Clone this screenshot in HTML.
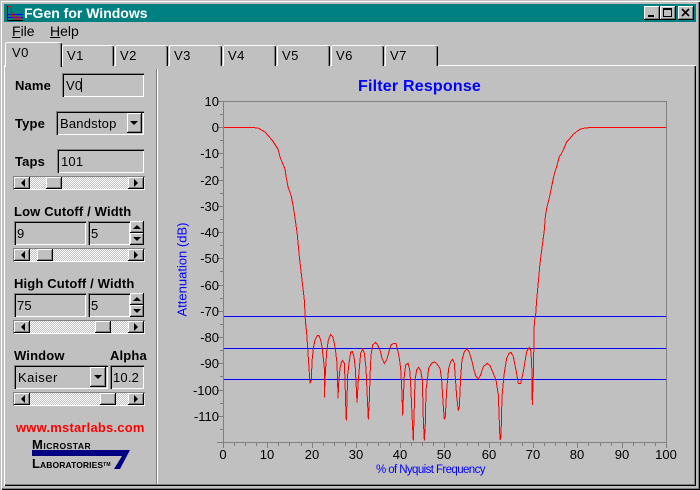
<!DOCTYPE html>
<html><head><meta charset="utf-8"><title>FGen for Windows</title>
<style>
html,body{margin:0;padding:0;background:#c0c0c0}
#w{position:relative;width:700px;height:490px;overflow:hidden;background:#c0c0c0;font-family:"Liberation Sans",sans-serif;font-size:13px;color:#000}
#w div,#w span.a{position:absolute;box-sizing:border-box}
.f{box-shadow:inset 1px 1px #808080,inset 2px 2px #000,inset -1px -1px #fff;padding:5px 0 0 4px;font-size:13px;line-height:16px;white-space:nowrap;letter-spacing:.2px}
.b{background:#c0c0c0;box-shadow:inset -1px -1px #000,inset 1px 1px #fff,inset -2px -2px #808080}
.l{font-weight:bold;font-size:13px;line-height:16px;white-space:nowrap;letter-spacing:.15px}
.tab{top:45px;height:21px;background:#c0c0c0;border-top:1px solid #fff;border-left:1px solid #fff;box-shadow:inset -1px 0 #000,inset -2px 0 #808080;font-size:13px;letter-spacing:.5px;line-height:19px;padding-left:4px;border-top-left-radius:2px;border-top-right-radius:2px}
.sb{left:13px;width:132px;height:14px;box-shadow:inset 1px 1px #808080;background:#fff}
.tr{left:1px;top:1px;right:0;bottom:1px;background:conic-gradient(#fff 25%,#c0c0c0 0 50%,#fff 0 75%,#c0c0c0 0) 0 0/2px 2px}
.ar{width:0;height:0;border:4px solid transparent}
.yl{left:180px;width:39px;text-align:right;font-size:13px;line-height:16px;color:#000}
.xl{top:447px;width:40px;text-align:center;font-size:13px;line-height:16px;color:#000}
</style></head><body>
<div id="w">
<!-- window frame -->
<div style="left:0;top:0;width:700px;height:490px;box-shadow:inset 1px 1px #c0c0c0,inset 2px 2px #fff,inset -1px -1px #000,inset -2px -2px #808080"></div>
<!-- title bar -->
<div style="left:4px;top:4px;width:692px;height:18px;background:#008080"></div>
<svg style="position:absolute;left:5px;top:4px" width="18" height="18" shape-rendering="crispEdges">
<rect x="1" y="1" width="16" height="16" fill="#008080"/>
<path d="M2.500 2V17M2 16.500H18" stroke="#000" fill="none"/>
<path d="M3 10.500H18M3 13.500H18" stroke="#0000ff" fill="none"/>
<path d="M3 2.500H6.500V8L8.500 14V16M9 11V16M11 12V16M13 12V16M15 13V16" stroke="#ff0000" fill="none"/>
</svg>
<div style="left:24px;top:4px;color:#fff;font-weight:bold;font-size:14px;line-height:18px;white-space:nowrap">FGen for Windows</div>
<div class="b" style="left:644px;top:6px;width:16px;height:14px"><div style="left:4px;top:9px;width:6px;height:2px;background:#000"></div></div>
<div class="b" style="left:660px;top:6px;width:16px;height:14px"><div style="left:3px;top:2px;width:9px;height:9px;border:1px solid #000;border-top-width:2px"></div></div>
<div class="b" style="left:678px;top:6px;width:16px;height:14px">
<svg style="position:absolute;left:3px;top:2px" width="10" height="10"><path d="M1 1L8 8M8 1L1 8" stroke="#000" stroke-width="1.600"/></svg></div>
<!-- menu -->
<div style="left:12px;top:23px;font-size:14px;line-height:17px"><u>F</u>ile</div>
<div style="left:50px;top:23px;font-size:14px;line-height:17px"><u>H</u>elp</div>
<!-- tab panel -->
<div style="left:4px;top:65px;width:692px;height:421px;border-top:1px solid #fff;border-left:1px solid #fff;box-shadow:inset -1px -1px #000,inset -2px -2px #808080"></div>
<div class="tab" style="left:62px;width:52px">V1</div>
<div class="tab" style="left:115px;width:53px">V2</div>
<div class="tab" style="left:169px;width:53px">V3</div>
<div class="tab" style="left:223px;width:53px">V4</div>
<div class="tab" style="left:277px;width:53px">V5</div>
<div class="tab" style="left:331px;width:53px">V6</div>
<div class="tab" style="left:385px;width:53px">V7</div>
<div class="tab" style="left:5px;top:42px;width:57px;height:25px;line-height:20px;padding-left:6px;box-shadow:inset -1px 0 #000,inset -2px 0 #808080">V0</div>
<!-- divider -->
<div style="left:156px;top:69px;width:1px;height:415px;background:#808080"></div>
<div style="left:157px;top:69px;width:1px;height:415px;background:#fff"></div>
<!-- left controls -->
<div class="l" style="left:15px;top:78px">Name</div>
<div class="f" style="left:62px;top:73px;width:82px;height:24px">V0</div>
<div style="left:81px;top:78px;width:1px;height:14px;background:#000"></div>
<div class="l" style="left:15px;top:116px">Type</div>
<div class="f" style="left:56px;top:111px;width:88px;height:24px">Bandstop</div>
<div class="b" style="left:127px;top:113px;width:15px;height:20px"><div class="ar" style="left:3px;top:8px;border-top-color:#000"></div></div>
<div class="l" style="left:15px;top:154px">Taps</div>
<div class="f" style="left:57px;top:149px;width:87px;height:24px">101</div>
<div class="sb" style="top:176px"><div class="tr"></div><div class="b" style="left:1px;top:1px;width:16px;height:12px"><div class="ar" style="left:3px;top:2px;border-right-color:#000"></div></div><div class="b" style="left:33px;top:1px;width:16px;height:12px"></div><div class="b" style="left:115px;top:1px;width:16px;height:12px"><div class="ar" style="left:6px;top:2px;border-left-color:#000"></div></div></div>
<div class="l" style="left:14px;top:204px">Low Cutoff / Width</div>
<div class="f" style="left:14px;top:221px;width:72px;height:24px;padding-left:3px">9</div>
<div class="f" style="left:88px;top:221px;width:42px;height:24px;padding-left:3px">5</div>
<div class="b" style="left:130px;top:221px;width:14px;height:12px"><div class="ar" style="left:3px;top:0;border-bottom-color:#000"></div></div>
<div class="b" style="left:130px;top:233px;width:14px;height:12px"><div class="ar" style="left:3px;top:4px;border-top-color:#000"></div></div>
<div class="sb" style="top:248px"><div class="tr"></div><div class="b" style="left:1px;top:1px;width:16px;height:12px"><div class="ar" style="left:3px;top:2px;border-right-color:#000"></div></div><div class="b" style="left:24px;top:1px;width:16px;height:12px"></div><div class="b" style="left:115px;top:1px;width:16px;height:12px"><div class="ar" style="left:6px;top:2px;border-left-color:#000"></div></div></div>
<div class="l" style="left:14px;top:276px">High Cutoff / Width</div>
<div class="f" style="left:14px;top:293px;width:72px;height:24px;padding-left:3px">75</div>
<div class="f" style="left:88px;top:293px;width:42px;height:24px;padding-left:3px">5</div>
<div class="b" style="left:130px;top:293px;width:14px;height:12px"><div class="ar" style="left:3px;top:0;border-bottom-color:#000"></div></div>
<div class="b" style="left:130px;top:305px;width:14px;height:12px"><div class="ar" style="left:3px;top:4px;border-top-color:#000"></div></div>
<div class="sb" style="top:320px"><div class="tr"></div><div class="b" style="left:1px;top:1px;width:16px;height:12px"><div class="ar" style="left:3px;top:2px;border-right-color:#000"></div></div><div class="b" style="left:82px;top:1px;width:16px;height:12px"></div><div class="b" style="left:115px;top:1px;width:16px;height:12px"><div class="ar" style="left:6px;top:2px;border-left-color:#000"></div></div></div>
<div class="l" style="left:14px;top:348px">Window</div>
<div class="l" style="left:110px;top:348px">Alpha</div>
<div class="f" style="left:14px;top:365px;width:94px;height:24px;letter-spacing:.5px">Kaiser</div>
<div class="b" style="left:90px;top:367px;width:16px;height:20px"><div class="ar" style="left:4px;top:8px;border-top-color:#000"></div></div>
<div class="f" style="left:110px;top:365px;width:34px;height:24px;padding-left:3px">10.2</div>
<div class="sb" style="top:392px"><div class="tr"></div><div class="b" style="left:1px;top:1px;width:16px;height:12px"><div class="ar" style="left:3px;top:2px;border-right-color:#000"></div></div><div class="b" style="left:87px;top:1px;width:16px;height:12px"></div><div class="b" style="left:115px;top:1px;width:16px;height:12px"><div class="ar" style="left:6px;top:2px;border-left-color:#000"></div></div></div>
<div class="l" style="left:16px;top:420px;color:#ff0000;font-size:13px;letter-spacing:.2px">www.mstarlabs.com</div>
<!-- logo -->
<svg style="position:absolute;left:30px;top:448px" width="104" height="24"><path d="M2 2H100L90 21H84L92 8H2Z" fill="#000080"/></svg>
<div style="left:32px;top:438px;font-weight:bold;font-size:8.500px;line-height:14px;letter-spacing:.5px;white-space:nowrap"><span style="font-size:13px">M</span>ICROSTAR</div>
<div style="left:32px;top:457px;font-weight:bold;font-size:8.500px;line-height:14px;letter-spacing:.1px;white-space:nowrap"><span style="font-size:13px">L</span>ABORATORIES<span style="font-size:5px;vertical-align:2px">TM</span></div>
<!-- chart -->
<div style="left:358px;top:77px;color:#0000ff;font-weight:bold;font-size:16px;line-height:20px;letter-spacing:.2px;white-space:nowrap">Filter Response</div>
<svg style="position:absolute;left:0;top:0" width="700" height="490" shape-rendering="crispEdges">
<rect x="223.500" y="101.500" width="443" height="341" fill="none" stroke="#808080"/>
<path stroke="#808080" fill="none" d="M217 101.500H223M220 114.500H223M217 127.500H223M220 140.500H223M217 153.500H223M220 167.500H223M217 180.500H223M220 193.500H223M217 206.500H223M220 219.500H223M217 232.500H223M220 245.500H223M217 258.500H223M220 271.500H223M217 285.500H223M220 298.500H223M217 311.500H223M220 324.500H223M217 337.500H223M220 350.500H223M217 363.500H223M220 376.500H223M217 390.500H223M220 403.500H223M217 416.500H223M220 429.500H223M217 442.500H223
M223.500 442V448M234.500 442V446M245.500 442V446M256.500 442V446M267.500 442V448M278.500 442V446M289.500 442V446M301.500 442V446M312.500 442V448M323.500 442V446M334.500 442V446M345.500 442V446M356.500 442V448M367.500 442V446M378.500 442V446M389.500 442V446M400.500 442V448M411.500 442V446M422.500 442V446M433.500 442V446M444.500 442V448M456.500 442V446M467.500 442V446M478.500 442V446M489.500 442V448M500.500 442V446M511.500 442V446M522.500 442V446M533.500 442V448M544.500 442V446M555.500 442V446M566.500 442V446M577.500 442V448M588.500 442V446M600.500 442V446M611.500 442V446M622.500 442V448M633.500 442V446M644.500 442V446M655.500 442V446M666.500 442V448"/>
<path stroke="#0000ff" fill="none" d="M224 316.500H666M224 348.500H666M224 379.500H666"/>
<g fill="none" stroke="#ff0000">
<polyline points="224,127.500 252,127.500 258,128 265,132 272,140 278,149 280,157 282,162 285,169 286,176 288,187 291,195 293,205 295,218 297,232 299.500,258 302.500,284 304.300,300"/>
<g transform="translate(290,300) scale(.33333)"><polyline vector-effect="non-scaling-stroke" points="43,0 46,60 50,100 53,145 57,205 60,250 64,240 66,185 70,145 75,120 82,107 87,107 92,120 96,140 100,175 103,205 103,292 105,240 107,205 110,155 115,120 122,103 128,110 133,130 137,155 141,190 143,250 144,295 146,250 150,205 154,187 158,181 163,190 165,240 167,315 169,362 171,300 173,225 177,190 182,157 187,154 192,170 196,205 199,265 201,308 205,240 208,205 212,160 218,147 223,160 228,205 232,295 235,358 238,300 240,230 243,165 248,135 257,127 263,135 270,150 276,175 283,190 290,180 297,155 303,135 311,130 318,130 323,150 328,175 332,205 336,280 338,347 340,295 343,225 347,195 354,190 358,205 360,215"/></g>
<g transform="translate(410,300) scale(.33333)"><polyline vector-effect="non-scaling-stroke" points="0,215 3,275 7,365 10,422 12,355 15,240 20,210 26,202 32,212 37,240 40,360 43,422 46,370 48,270 52,240 56,205 65,190 73,186 80,190 90,205 95,240 100,320 103,358 106,350 110,270 116,205 122,185 128,178 133,190 140,290 145,332 148,320 152,230 156,180 163,155 170,147 177,155 185,180 192,210 198,230 205,237 212,225 220,200 232,190 240,197 250,220 258,240 265,285 270,420 273,412 276,290 282,225 290,175 297,160 303,157 310,170 317,205 325,250 332,250 340,215 350,155 358,142 362,150 365,185 367,315 370,225 373,65 377,45 380,0"/></g>
<g transform="translate(520,100) scale(.33333)"><polyline vector-effect="non-scaling-stroke" points="50,600 60,490 73,390 76,350 80,325 85,305 90,285 97,250 100,235 105,215 110,200 118,170 125,160 132,145 140,125 150,115 160,103 170,95 180,88 190,85 207,83 438,82"/></g>
</g>
</svg>
<div class="yl" style="top:94px">10</div>
<div class="yl" style="top:120px">0</div>
<div class="yl" style="top:146px">-10</div>
<div class="yl" style="top:173px">-20</div>
<div class="yl" style="top:199px">-30</div>
<div class="yl" style="top:225px">-40</div>
<div class="yl" style="top:251px">-50</div>
<div class="yl" style="top:278px">-60</div>
<div class="yl" style="top:304px">-70</div>
<div class="yl" style="top:330px">-80</div>
<div class="yl" style="top:356px">-90</div>
<div class="yl" style="top:383px">-100</div>
<div class="yl" style="top:409px">-110</div>
<div class="xl" style="left:203px">0</div>
<div class="xl" style="left:247px">10</div>
<div class="xl" style="left:292px">20</div>
<div class="xl" style="left:336px">30</div>
<div class="xl" style="left:380px">40</div>
<div class="xl" style="left:424px">50</div>
<div class="xl" style="left:469px">60</div>
<div class="xl" style="left:513px">70</div>
<div class="xl" style="left:557px">80</div>
<div class="xl" style="left:602px">90</div>
<div class="xl" style="left:646px">100</div>
<div style="left:376px;top:463px;color:#0000ff;font-size:11.500px;letter-spacing:-.6px;line-height:15px;white-space:nowrap">% of Nyquist Frequency</div>
<div style="left:122px;top:262px;width:120px;text-align:center;color:#0000ff;font-size:13px;line-height:15px;white-space:nowrap;transform:rotate(-90deg)">Attenuation (dB)</div>
</div>
</body></html>
